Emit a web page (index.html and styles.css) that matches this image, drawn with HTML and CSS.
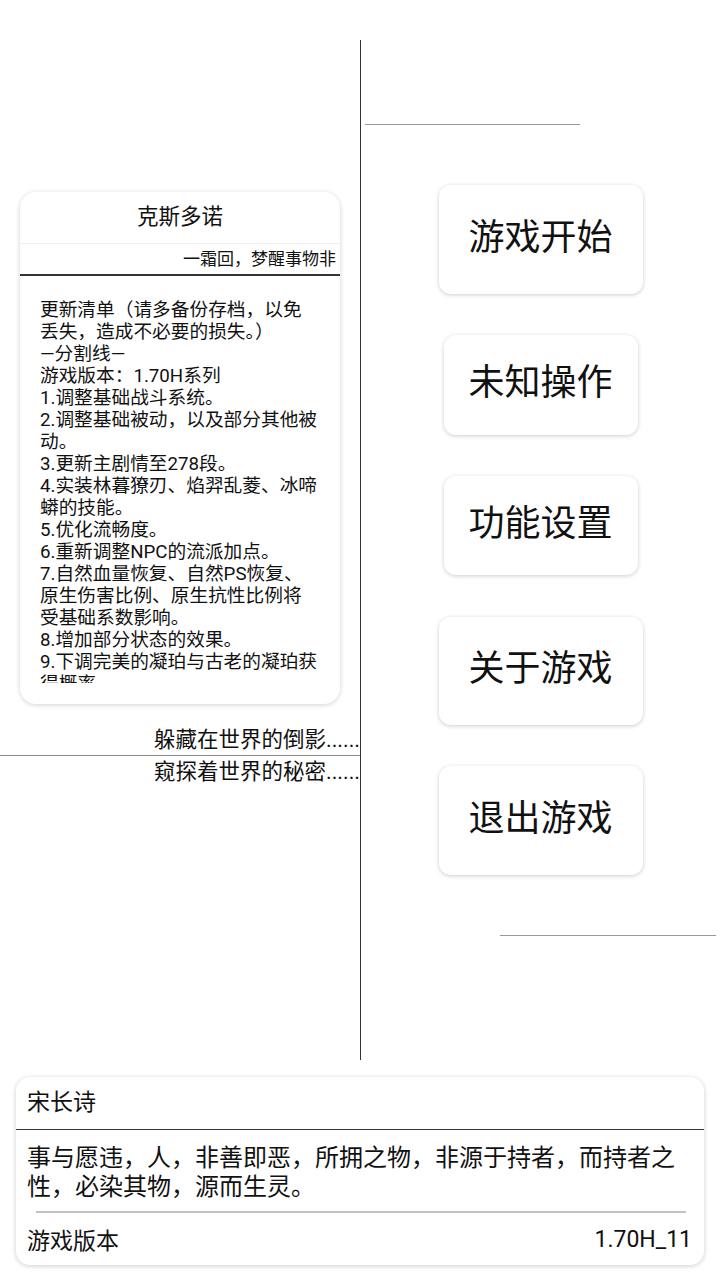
FILE: index.html
```html
<!DOCTYPE html>
<html lang="zh">
<head>
<meta charset="utf-8">
<title>克斯多诺</title>
<link rel="stylesheet" href="styles.css">
</head>
<body>
<div class="screen">
  <div class="main">
    <div class="left">
      <div class="card">
        <div class="card-title">克斯多诺</div>
        <div class="card-sub">一霜回，梦醒事物非</div>
        <div class="card-body">
          <div class="notes">更新清单（请多备份存档，以免<br>丢失，造成不必要的损失。）<br>—分割线—<br>游戏版本：1.70H系列<br>1.调整基础战斗系统。<br>2.调整基础被动，以及部分其他被<br>动。<br>3.更新主剧情至278段。<br>4.实装林暮獠刃、焰羿乱菱、冰啼<br>蟒的技能。<br>5.优化流畅度。<br>6.重新调整NPC的流派加点。<br>7.自然血量恢复、自然PS恢复、<br>原生伤害比例、原生抗性比例将<br>受基础系数影响。<br>8.增加部分状态的效果。<br>9.下调完美的凝珀与古老的凝珀获<br>得概率。</div>
        </div>
      </div>
      <div class="motto motto-1">躲藏在世界的倒影......</div>
      <div class="motto-rule"></div>
      <div class="motto motto-2">窥探着世界的秘密......</div>
    </div>
    <div class="right">
      <div class="rule rule-top"></div>
      <div class="btn btn-big btn-first">游戏开始</div>
      <div class="btn btn-small">未知操作</div>
      <div class="btn btn-small btn-third">功能设置</div>
      <div class="btn btn-big btn-fourth">关于游戏</div>
      <div class="btn btn-big">退出游戏</div>
      <div class="rule rule-bottom"></div>
    </div>
  </div>
  <div class="info">
    <div class="info-head">宋长诗</div>
    <div class="info-body">事与愿违，人，非善即恶，所拥之物，非源于持者，而持者之性，必染其物，源而生灵。</div>
    <div class="info-sep"></div>
    <div class="info-foot">
      <span>游戏版本</span>
      <span>1.70H_11</span>
    </div>
  </div>
</div>
</body>
</html>
```

FILE: styles.css
```css
* { box-sizing: border-box; }

html, body {
  margin: 0;
  padding: 0;
  background: #ffffff;
}

body {
  font-family: Roboto, "Noto Sans CJK SC", sans-serif;
  color: #111111;
}

.screen {
  width: 720px;
  height: 1280px;
  padding-top: 40px;
}

.main {
  display: flex;
  height: 1020px;
}

.left {
  width: 361px;
  border-right: 1.5px solid #333333;
  padding-top: 152px;
  display: flex;
  flex-direction: column;
}

.card {
  margin: 0 20px;
  height: 512px;
  background: #ffffff;
  border-radius: 16px;
  box-shadow: 0 1px 5px rgba(0, 0, 0, 0.18);
  display: flex;
  flex-direction: column;
}

.card-title {
  height: 52px;
  line-height: 50px;
  text-align: center;
  font-size: 21.5px;
  border-bottom: 1px solid #f0f0f0;
}

.card-sub {
  height: 32px;
  line-height: 30px;
  text-align: right;
  font-size: 17px;
  padding-right: 4px;
  border-bottom: 2px solid #333333;
}

.card-body {
  padding: 23px 20px 0 20px;
}

.notes {
  height: 384px;
  overflow: hidden;
  white-space: nowrap;
  font-size: 18.7px;
  line-height: 22px;
}

.motto {
  text-align: right;
  font-size: 21.5px;
  line-height: 28px;
  white-space: nowrap;
}

.motto-1 {
  margin-top: 22px;
}

.motto-rule {
  height: 1px;
  background: #888888;
  margin-top: 1px;
}

.motto-2 {
  margin-top: 2px;
}

.right {
  flex: 1;
  display: flex;
  flex-direction: column;
  align-items: center;
}

.rule {
  align-self: flex-start;
  height: 1px;
  background: #999999;
}

.rule-top {
  margin-top: 84px;
  margin-left: 4px;
  width: 215px;
}

.rule-bottom {
  margin-top: 60px;
  margin-left: 139px;
  width: 216px;
}

.btn {
  display: flex;
  align-items: center;
  justify-content: center;
  background: #ffffff;
  border-radius: 12px;
  box-shadow: 0 1px 4px rgba(0, 0, 0, 0.2);
  font-size: 36px;
  line-height: 1;
  padding-bottom: 4px;
  margin-top: 41px;
  color: #111111;
}

.btn-big {
  width: 204px;
  height: 109px;
}

.btn-small {
  width: 194px;
  height: 100px;
}

.btn-first {
  margin-top: 60px;
}

.btn-third {
  height: 99px;
}

.btn-fourth {
  margin-top: 42px;
  height: 108px;
}

.info {
  margin: 17px 16px 0 16px;
  height: 188px;
  background: #ffffff;
  border-radius: 14px;
  box-shadow: 0 1px 5px rgba(0, 0, 0, 0.2);
  display: flex;
  flex-direction: column;
}

.info-head {
  height: 53px;
  line-height: 52px;
  padding-left: 11px;
  font-size: 23px;
  border-bottom: 1.5px solid #333333;
}

.info-body {
  padding: 14px 12px 9px 11px;
  font-size: 24px;
  line-height: 29px;
}

.info-sep {
  margin: 0 18px 0 20px;
  height: 2px;
  background: #c2c2c2;
}

.info-foot {
  flex: 1;
  display: flex;
  align-items: center;
  justify-content: space-between;
  padding: 0 12px 0 11px;
  font-size: 23px;
}
```
